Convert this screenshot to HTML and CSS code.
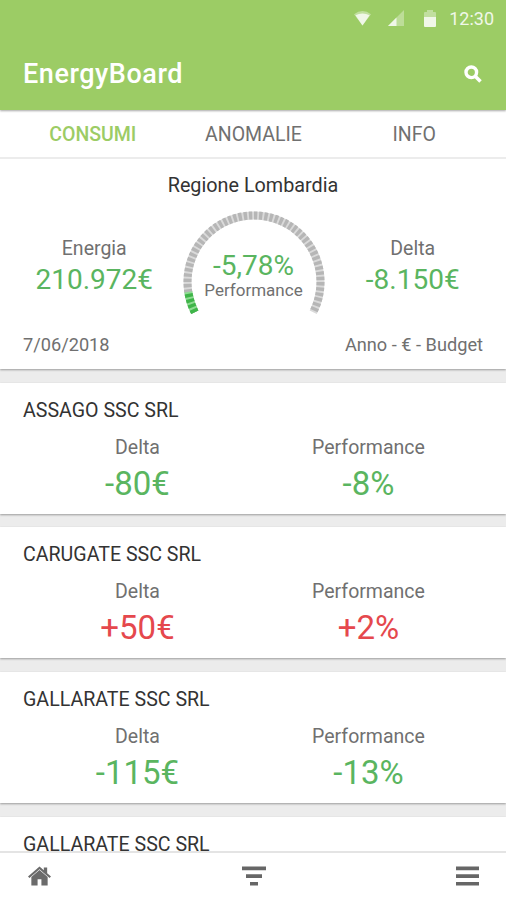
FILE: index.html
```html
<!DOCTYPE html>
<html lang="it">
<head>
<meta charset="UTF-8">
<meta name="viewport" content="width=device-width, initial-scale=1.0">
<title>EnergyBoard</title>
<link rel="stylesheet" href="styles.css">
</head>
<body>
<div class="app">
  <!-- Header -->
  <header class="header">
    <div class="status-bar">
      <svg class="wifi" width="17" height="16" viewBox="0 0 18 16"><path d="M0 4Q9-3 18 4L9 16Z" fill="#fff" opacity=".45"/><path d="M1.5 5Q9 1.5 16.5 5L9 16Z" fill="#fff"/></svg>
      <svg class="signal" width="16" height="16" viewBox="0 0 17 17"><path d="M0 17L17 0V17Z" fill="#fff" opacity=".4"/><path d="M0 17L9 8V17Z" fill="#fff"/></svg>
      <svg class="battery" width="12" height="17" viewBox="0 0 12 17"><path d="M0 3Q0 2 1 2H3V0H9V2H11Q12 2 12 3V7H0Z" fill="#fff" opacity=".45"/><path d="M0 7H12V16Q12 17 11 17H1Q0 17 0 16Z" fill="#fff"/></svg>
      <span class="clock">12:30</span>
    </div>
    <div class="title-bar">
      <h1>EnergyBoard</h1>
      <svg width="18" height="18" viewBox="0 0 18 18" fill="none" stroke="#fff"><circle cx="7.3" cy="7.3" r="5.3" stroke-width="3.4"/><path d="M11.5 11.5L16.5 16.5" stroke-width="3.6"/></svg>
    </div>
  </header>

  <!-- Tabs -->
  <nav class="tabs">
    <a class="tab active"><span>CONSUMI</span></a>
    <a class="tab"><span>ANOMALIE</span></a>
    <a class="tab"><span>INFO</span></a>
  </nav>

  <main class="content">
    <!-- Region summary -->
    <section class="summary">
      <h2>Regione Lombardia</h2>
      <div class="summary-row">
        <div class="summary-col">
          <div class="label">Energia</div>
          <div class="value good">210.972€</div>
        </div>
        <div class="gauge">
          <svg width="142" height="108" viewBox="0 0 142 108" fill="none" stroke-width="8">
            <path d="M11.8 101.2A66.5 66.5 0 1 1 130.2 101.2" pathLength="234" stroke="#dadada"/>
            <path d="M11.8 101.2A66.5 66.5 0 1 1 130.2 101.2" pathLength="234" stroke="#b6b6b6" stroke-dasharray="2.9 1.6"/>
            <path d="M11.8 101.2A66.5 66.5 0 0 1 5.3 80.9" pathLength="18" stroke="#8fdc93"/>
            <path d="M11.8 101.2A66.5 66.5 0 0 1 5.3 80.9" pathLength="18" stroke="#3fb549" stroke-dasharray="2.9 1.6"/>
          </svg>
          <div class="gauge-text">
            <div class="gauge-value good">-5,78%</div>
            <div class="gauge-label">Performance</div>
          </div>
        </div>
        <div class="summary-col">
          <div class="label">Delta</div>
          <div class="value good">-8.150€</div>
        </div>
      </div>
      <div class="summary-footer">
        <span class="date">7/06/2018</span>
        <span class="filters">Anno - € - Budget</span>
      </div>
    </section>

    <!-- Sites -->
    <section class="card">
      <h3>ASSAGO SSC SRL</h3>
      <div class="card-row">
        <div><div class="label">Delta</div><div class="card-value good">-80€</div></div>
        <div><div class="label">Performance</div><div class="card-value good">-8%</div></div>
      </div>
    </section>
    <section class="card">
      <h3>CARUGATE SSC SRL</h3>
      <div class="card-row">
        <div><div class="label">Delta</div><div class="card-value bad">+50€</div></div>
        <div><div class="label">Performance</div><div class="card-value bad">+2%</div></div>
      </div>
    </section>
    <section class="card">
      <h3>GALLARATE SSC SRL</h3>
      <div class="card-row">
        <div><div class="label">Delta</div><div class="card-value good">-115€</div></div>
        <div><div class="label">Performance</div><div class="card-value good">-13%</div></div>
      </div>
    </section>
    <section class="card">
      <h3>GALLARATE SSC SRL</h3>
    </section>
  </main>

  <!-- Bottom navigation -->
  <footer class="bottom-nav">
    <svg width="23" height="20" viewBox="0 0 24 20" fill="#6b6b6b"><path d="M12 0L16.5 4V1H20V7L24 10.5L22.5 12L12 3L1.5 12L0 10.5Z"/><path d="M12 3.8L20.5 11V20H14V13.5H10V20H3.5V11Z"/></svg>
    <svg width="24" height="20" viewBox="0 0 24 20" fill="#666"><path d="M0 .5H24V4.2H0ZM4 8.2H20V11.9H4ZM8 15.9H16V19.6H8Z"/></svg>
    <svg width="23" height="20" viewBox="0 0 23 20" fill="#666"><path d="M0 .5H23V4.2H0ZM0 8.2H23V11.9H0ZM0 15.9H23V19.6H0Z"/></svg>
  </footer>
</div>
</body>
</html>
```
FILE: styles.css
```css
* {
  box-sizing: border-box;
}
body {
  margin: 0;
  font-family: Roboto, "Liberation Sans", sans-serif;
  color: #707070;
  background-color: #ececec;
}
h1, h2, h3 {
  margin: 0;
  font-weight: 400;
}
svg {
  display: block;
}
.app {
  height: 900px;
  display: flex;
  flex-direction: column;
  overflow: hidden;
}
/* Header */
.header {
  flex: none;
  height: 110px;
  background-color: #9ccc65;
  color: #fff;
  box-shadow: 0 1px 2px rgba(0, 0, 0, 0.35);
  z-index: 1;
}
.status-bar {
  height: 36px;
  padding-right: 12px;
  display: flex;
  justify-content: flex-end;
  align-items: center;
  opacity: 0.85;
}
.signal {
  margin-left: 17px;
}
.battery {
  margin: 0 13px 0 20px;
}
.clock {
  font-size: 18px;
}
.title-bar {
  height: 76px;
  padding: 0 24px 0 23px;
  display: flex;
  justify-content: space-between;
  align-items: center;
}
.title-bar h1 {
  font-size: 27px;
  font-weight: 500;
  letter-spacing: 0.55px;
}
/* Tabs */
.tabs {
  flex: none;
  height: 49px;
  padding: 0 12px;
  display: grid;
  grid-template-columns: repeat(3, 1fr);
  background-color: #fff;
  border-bottom: 2px solid #ececec;
}
.tab {
  padding: 1px 0 0 1px;
  display: flex;
  justify-content: center;
  align-items: center;
  font-size: 19.5px;
}
.tab.active {
  color: #9ccc65;
  font-weight: 500;
}
.content {
  flex: 1;
  min-height: 0;
  overflow: hidden;
}
/* Summary */
.summary {
  height: 210px;
  background-color: #fff;
  box-shadow: 0 1px 2px rgba(0, 0, 0, 0.35);
}
.summary h2 {
  padding-top: 14px;
  font-size: 19.8px;
  line-height: 25px;
  text-align: center;
  color: #333;
}
.summary-row {
  height: 122px;
  padding: 0 5px 0 6px;
  display: grid;
  grid-template-columns: 1fr 142px 1fr;
}
.summary-col {
  padding-top: 37px;
  text-align: center;
}
.label {
  font-size: 19.5px;
  line-height: 28px;
}
.summary-col .label {
  line-height: 27px;
}
.value {
  font-size: 28px;
  line-height: 36px;
}
.good {
  color: #5ab560;
}
.bad {
  color: #e5484d;
}
.gauge {
  position: relative;
  padding-top: 13px;
}
.gauge-text {
  position: absolute;
  top: 53px;
  left: 0;
  right: 0;
  text-align: center;
}
.gauge-value {
  font-size: 28px;
  line-height: 30px;
}
.gauge-label {
  font-size: 17px;
  line-height: 19px;
}
.summary-footer {
  padding: 14px 23px 0;
  display: flex;
  justify-content: space-between;
  font-size: 18.2px;
  line-height: 22px;
}
/* Site cards */
.card {
  height: 131px;
  margin-top: 13.7px;
  padding-top: 15px;
  background-color: #fff;
  box-shadow: 0 1px 2px rgba(0, 0, 0, 0.35);
}
.card h3 {
  padding-left: 23px;
  font-size: 19.6px;
  line-height: 26px;
  color: #333;
}
.card-row {
  padding: 10px 22px 0;
  display: grid;
  grid-template-columns: 1fr 1fr;
  text-align: center;
}
.card-value {
  font-size: 33px;
  line-height: 44px;
}
/* Bottom navigation */
.bottom-nav {
  flex: none;
  height: 49px;
  padding: 0 27px 1px 28px;
  display: flex;
  justify-content: space-between;
  align-items: center;
  background-color: #fff;
  border-top: 2px solid #e4e4e4;
}
```
